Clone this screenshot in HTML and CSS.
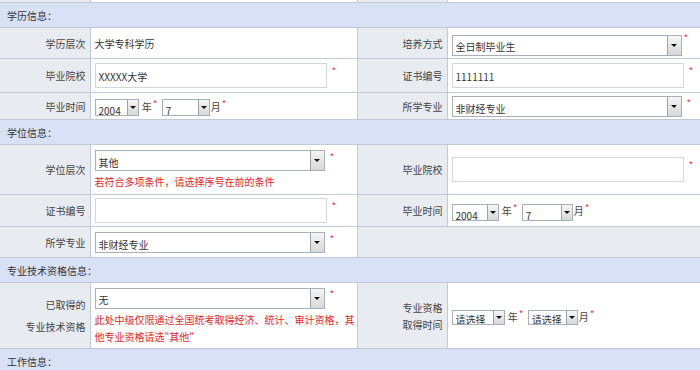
FILE: index.html
```html
<!DOCTYPE html>
<html lang="zh-CN">
<head>
  <meta charset="UTF-8">
  <title>报名信息</title>
  <link rel="stylesheet" href="styles.css">
</head>
<body>
  <table class="form">
    <colgroup>
      <col class="c-lbl">
      <col class="c-val">
      <col class="c-lbl2">
      <col class="c-val2">
    </colgroup>

    <tr class="stub">
      <td class="lbl"></td><td class="val"></td><td class="lbl"></td><td class="val"></td>
    </tr>

    <!-- 学历信息 -->
    <tr class="sec"><td colspan="4">学历信息：</td></tr>
    <tr class="r30">
      <td class="lbl">学历层次</td>
      <td class="val">大学专科学历</td>
      <td class="lbl">培养方式</td>
      <td class="val">
        <span class="sel w230"><select><option>全日制毕业生</option></select><span class="sel-btn"></span></span><em class="req up">*</em>
      </td>
    </tr>
    <tr class="r34">
      <td class="lbl">毕业院校</td>
      <td class="val"><input class="txt" type="text" value="XXXXX大学"><em class="req">*</em></td>
      <td class="lbl">证书编号</td>
      <td class="val"><input class="txt" type="text" value="1111111"><em class="req">*</em></td>
    </tr>
    <tr class="r28">
      <td class="lbl">毕业时间</td>
      <td class="val">
        <span class="sel sm w44"><select><option>2004</option></select><span class="sel-btn"></span></span>
        <span class="unit">年</span><em class="req">*</em>
        <span class="sel sm w48"><select><option>7</option></select><span class="sel-btn"></span></span><span class="unit">月</span><em class="req">*</em>
      </td>
      <td class="lbl">所学专业</td>
      <td class="val">
        <span class="sel w230"><select><option>非财经专业</option></select><span class="sel-btn"></span></span><em class="req">*</em>
      </td>
    </tr>

    <!-- 学位信息 -->
    <tr class="sec"><td colspan="4">学位信息：</td></tr>
    <tr class="r49">
      <td class="lbl">学位层次</td>
      <td class="val">
        <span class="sel w230"><select><option>其他</option></select><span class="sel-btn"></span></span><em class="req">*</em>
        <div class="hint">若符合多项条件，请选择序号在前的条件</div>
      </td>
      <td class="lbl">毕业院校</td>
      <td class="val"><input class="txt" type="text" value=""><em class="req">*</em></td>
    </tr>
    <tr class="r32">
      <td class="lbl">证书编号</td>
      <td class="val"><input class="txt" type="text" value=""><em class="req">*</em></td>
      <td class="lbl">毕业时间</td>
      <td class="val">
        <span class="sel sm w47"><select><option>2004</option></select><span class="sel-btn"></span></span>
        <span class="unit">年</span><em class="req">*</em>
        <span class="sel sm w51"><select><option>7</option></select><span class="sel-btn"></span></span><span class="unit">月</span><em class="req">*</em>
      </td>
    </tr>
    <tr class="r31">
      <td class="lbl">所学专业</td>
      <td class="val">
        <span class="sel w230"><select><option>非财经专业</option></select><span class="sel-btn"></span></span><em class="req">*</em>
      </td>
      <td class="lbl" colspan="2"></td>
    </tr>

    <!-- 专业技术资格信息 -->
    <tr class="sec"><td colspan="4">专业技术资格信息：</td></tr>
    <tr class="r65">
      <td class="lbl tall">已取得的<br>专业技术资格</td>
      <td class="val">
        <span class="sel w230"><select><option>无</option></select><span class="sel-btn"></span></span><em class="req">*</em>
        <div class="hint wide">此处中级仅限通过全国统考取得经济、统计、审计资格，其他专业资格请选"其他"</div>
      </td>
      <td class="lbl two">专业资格<br>取得时间</td>
      <td class="val">
        <span class="sel xs w53"><select><option>请选择</option></select><span class="sel-btn"></span></span>
        <span class="unit">年</span><em class="req">*</em>
        <span class="sel xs w50"><select><option>请选择</option></select><span class="sel-btn"></span></span><span class="unit">月</span><em class="req">*</em>
      </td>
    </tr>

    <!-- 工作信息 -->
    <tr class="sec"><td colspan="4">工作信息：</td></tr>
  </table>
</body>
</html>
```

FILE: styles.css
```css
body {
  margin: 0;
  background: #fff;
  font-family: "Noto Sans CJK SC", "Noto Sans", sans-serif;
  font-size: 10px;
  color: #333;
  overflow: hidden;
}

.form {
  width: 700px;
  border-collapse: collapse;
  table-layout: fixed;
}

.c-lbl { width: 90px; }
.c-val { width: 267px; }
.c-lbl2 { width: 90px; }
.c-val2 { width: 253px; }

.form td {
  border: 1px solid #c2c9d6;
  padding: 0;
  vertical-align: middle;
}

.form td:first-child {
  border-left: none;
}

.stub td {
  height: 2px;
  border-top: none;
}

/* section header */
.sec td {
  background-color: #d9e1f6;
  height: 24px;
  padding-left: 7px;
  color: #333;
}

.lbl {
  background-color: #e8ebf0;
  text-align: right;
  padding-right: 4px !important;
  color: #444;
  white-space: nowrap;
}

.lbl.tall { line-height: 22px; }
.lbl.two { line-height: 17px; }

.val {
  background-color: #fff;
  padding-left: 4px !important;
  padding-right: 4px !important;
}

.r30 td { height: 30px; }
.r34 td { height: 33px; }
.r28 td { height: 26px; }
.r49 td { height: 49px; }
.r32 td { height: 31px; }
.r31 td { height: 30px; }
.r65 td { height: 65px; }

/* text inputs */
.txt {
  width: 232px;
  height: 25px;
  box-sizing: border-box;
  border: 1px solid #d3d7dd;
  padding: 2px 0 0 3px;
  font: inherit;
  color: #333;
  vertical-align: middle;
  outline: none;
}

/* old style select box */
.sel {
  display: inline-flex;
  box-sizing: border-box;
  height: 21px;
  border: 1px solid #a9afb8;
  background: #fff;
  vertical-align: middle;
}

.sel select {
  appearance: none;
  -webkit-appearance: none;
  flex: 1;
  min-width: 0;
  border: none;
  background: transparent;
  font: inherit;
  color: #333;
  padding: 3px 0 0 3px;
  margin: 0;
  outline: none;
}

.sel-btn {
  width: 13px;
  margin: 0;
  border-left: 1px solid #9ba2ab;
  background: linear-gradient(#f6f6f6, #d5d7da);
  display: flex;
  align-items: center;
  justify-content: center;
}

.sel-btn::after {
  content: "";
  border-left: 3px solid transparent;
  border-right: 3px solid transparent;
  border-top: 3px solid #111;
}

.sel.sm { height: 17px; }
.sel.sm .sel-btn { width: 10px; }
.sel.xs { height: 15px; }
.sel.xs select { padding-top: 1px; }
.sel.xs .sel-btn { width: 10px; }

.w230 { width: 230px; }
.w44 { width: 44px; }
.w48 { width: 48px; }
.w47 { width: 47px; }
.w51 { width: 51px; }
.w53 { width: 53px; }
.w50 { width: 50px; }

.unit {
  color: #444;
  margin-left: 2px;
}

.sel + .unit { margin-left: 1px; }

.req {
  font-style: normal;
  color: #e8424a;
  font-size: 10px;
  margin-left: 5px;
  vertical-align: 3px;
}

.req.up { margin-left: 2px; vertical-align: 6px; }
.unit + .req { margin-left: 1px; margin-right: 2px; }

.hint {
  color: #e3262c;
  line-height: 17px;
  margin-top: 2px;
  word-break: break-all;
}

.hint.wide { margin-right: -6px; }
```
